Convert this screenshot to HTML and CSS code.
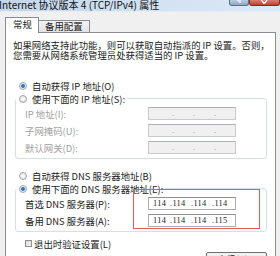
FILE: index.html
```html
<!doctype html>
<html>
<head>
  <meta charset="utf-8">
  <link rel="stylesheet" href="styles.css">
</head>
<body>
  <div class="window">
    <div class="titlebar">
      <span class="title">Internet 协议版本 4 (TCP/IPv4) 属性</span>
      <span class="tbtn help"><svg width="18" height="5" viewBox="0 0 18 5"><path d="M8 0 v1.5 M10 0 v3" stroke="#fff" stroke-width="1.2" fill="none"/></svg></span>
      <span class="tbtn close"><svg width="29" height="5" viewBox="0 0 29 5"><path d="M11.5 0 L14 3.5 M17 0 L14.5 3.5" stroke="#fff" stroke-width="1.3" fill="none"/></svg></span>
    </div>

    <div class="tabs">
      <span class="tab active">常规</span>
      <span class="tab">备用配置</span>
    </div>

    <div class="panel">
      <p class="intro">如果网络支持此功能，则可以获取自动指派的 IP 设置。否则，<br>您需要从网络系统管理员处获得适当的 IP 设置。</p>

      <div class="opt"><span class="radio on"></span>自动获得 IP 地址(O)</div>
      <fieldset class="group">
        <legend class="opt"><span class="radio"></span>使用下面的 IP 地址(S):</legend>
        <div class="row off"><span class="lbl">IP 地址(I):</span><span class="ip dis"><i></i><i>.</i><i>.</i><i>.</i></span></div>
        <div class="row off"><span class="lbl">子网掩码(U):</span><span class="ip dis"><i></i><i>.</i><i>.</i><i>.</i></span></div>
        <div class="row off"><span class="lbl">默认网关(D):</span><span class="ip dis"><i></i><i>.</i><i>.</i><i>.</i></span></div>
      </fieldset>

      <div class="opt opt-dns"><span class="radio"></span>自动获得 DNS 服务器地址(B)</div>
      <fieldset class="group">
        <legend class="opt"><span class="radio on"></span>使用下面的 DNS 服务器地址(E):</legend>
        <div class="row"><span class="lbl">首选 DNS 服务器(P):</span><span class="ip"><i>114</i><i>.114</i><i>.114</i><i>.114</i></span></div>
        <div class="row"><span class="lbl">备用 DNS 服务器(A):</span><span class="ip"><i>114</i><i>.114</i><i>.114</i><i>.115</i></span></div>
      </fieldset>

      <div class="check-row"><span class="check"></span>退出时验证设置(L)</div>
      <div class="btn-row"><span class="btn">高级(V)...</span></div>

      <div class="mark"></div>
    </div>
  </div>
</body>
</html>
```

FILE: styles.css
```css
body{
  margin:0;
  background:#f0f0f0;
  font-family:"Noto Sans CJK SC", sans-serif;
  font-size:9.4px;
  color:#222;
}
.window{
  width:280px;
  height:256px;
  overflow:hidden;
}
.titlebar{
  height:12px;
  display:flex;
  align-items:flex-start;
  background:linear-gradient(to right, #c3d6ea, #d3e3f3 60%, #dbe9f7);
  border-bottom:1px solid #e4edf6;
  box-sizing:border-box;
}
.title{
  flex:1;
  margin-left:-1px;
  font-size:10px;
  line-height:10px;
  white-space:nowrap;
  color:#111;
}
.tbtn{
  height:6px;
  box-sizing:border-box;
  border:1px solid #5f6f85;
  border-top:none;
  border-radius:0 0 3px 3px;
  display:flex;
}
.help{
  width:20px;
  background:linear-gradient(#b9cde3, #8ea8c8);
}
.close{
  width:31px;
  background:linear-gradient(#d6806f, #c0412f);
  border-color:#7d2d24;
}

.tabs{
  display:flex;
  align-items:flex-end;
  margin:5px 0 0 5px;
  height:15px;
}
.tab{
  height:11px;
  line-height:11px;
  padding:0 6px;
  border:1px solid #898c95;
  border-bottom:none;
  background:linear-gradient(#f2f2f2, #e3e3e3);
  margin-left:-1px;
}
.tab.active{
  width:34px;
  height:16px;
  line-height:13px;
  box-sizing:border-box;
  padding:0 0 0 7px;
  background:#fff;
  margin-left:0;
  margin-bottom:-1px;
  position:relative;
  z-index:1;
}
.panel{
  position:relative;
  width:271px;
  height:240px;
  box-sizing:border-box;
  margin-left:5px;
  border:1px solid #898c95;
  background:#fff;
}
.intro{
  margin:7px 0 0 7px;
  line-height:10px;
  white-space:nowrap;
}

.opt{
  height:13px;
  display:flex;
  align-items:center;
  white-space:nowrap;
}
.panel > .opt{
  margin-top:19px;
  padding-left:13px;
}
.panel > .opt-dns{ margin-top:10px; }
.radio{
  width:8px;
  height:8px;
  box-sizing:border-box;
  border-radius:50%;
  border:1px solid #a2a5a8;
  background:radial-gradient(circle, #fdfdfd, #dcdcdc);
  margin-right:5px;
}
.radio.on{
  background:radial-gradient(circle, #2a6fc9 0, #3e86d6 1.7px, #e6ecf3 2.3px, #f6f6f6 100%);
}

.group{
  margin:0 8px 0 9px;
  padding:0 0 2px 0;
  border:1px solid #d5dfe5;
  border-radius:3px;
  min-width:0;
}
.group legend{
  padding:0 2px 0 3px;
}
.row{
  height:17px;
  display:flex;
  align-items:center;
  padding-left:9px;
  white-space:nowrap;
}
.lbl{
  width:123px;
}
.row.off .lbl{ color:#a0a0a0; }
.ip{
  width:88px;
  height:13px;
  box-sizing:border-box;
  display:flex;
  align-items:center;
  border:1px solid #abadb3;
  border-top-color:#8e8f8f;
  background:#fff;
  font-size:8.4px;
  font-family:"Liberation Serif", "Noto Sans CJK SC", serif;
  padding-left:4px;
}
.ip i{
  font-style:normal;
  width:21px;
  text-align:left;
  letter-spacing:0.3px;
}
.ip i:first-child{ width:17px; }
.ip.dis{
  background:#f0f0f0;
  border-color:#c9cacc;
  border-top-color:#adb0b4;
  color:#8a8a8a;
  padding-left:0;
}
.ip.dis i{ width:22px; }
.ip.dis i:first-child{ width:24px; }

.check-row{
  height:13px;
  margin-top:5px;
  padding-left:19px;
  display:flex;
  align-items:center;
  white-space:nowrap;
}
.check{
  width:7px;
  height:7px;
  box-sizing:border-box;
  border:1px solid #8e8f8f;
  background:linear-gradient(135deg, #d8d8d8, #f6f6f6);
  margin-right:2px;
}
.btn-row{
  display:flex;
  justify-content:flex-end;
  margin:2px 8px 0 0;
}
.btn{
  width:61px;
  height:15px;
  box-sizing:border-box;
  border:1px solid #707070;
  border-radius:2px;
  background:linear-gradient(#f2f2f2, #ebebeb 50%, #dddddd 51%, #cfcfcf);
  text-align:center;
  line-height:12px;
}

/* red highlight drawn over the DNS fields */
.mark{
  position:absolute;
  left:127px;
  top:156px;
  width:127px;
  height:40px;
  box-sizing:border-box;
  border:1px solid #e55a5a;
}
```
